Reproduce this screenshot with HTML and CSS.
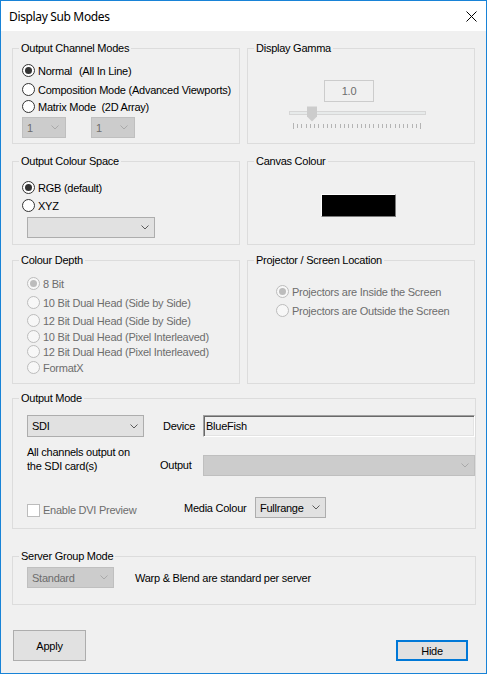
FILE: index.html
```html
<!DOCTYPE html>
<html>
<head>
<meta charset="utf-8">
<title>Display Sub Modes</title>
<link rel="stylesheet" href="styles.css">
</head>
<body>
<div class="window">
  <div class="titlebar">
    <span class="title">Display Sub Modes</span>
    <svg class="close" width="11" height="11" viewBox="0 0 11 11"><path d="M0.5 0.5L10.5 10.5M10.5 0.5L0.5 10.5" stroke="#000" stroke-width="1" fill="none"/></svg>
  </div>
  <div class="content">
    <div class="pair row1">
      <fieldset class="group">
        <legend>Output Channel Modes</legend>
        <div class="inner ocm">
          <div class="radio on"><span class="dot"></span><span>Normal</span><span class="aside">(All In Line)</span></div>
          <div class="radio"><span class="dot"></span><span>Composition Mode (Advanced Viewports)</span></div>
          <div class="radio"><span class="dot"></span><span>Matrix Mode&nbsp; (2D Array)</span></div>
          <div class="combos">
            <div class="combo disabled small"><span>1</span><svg class="chev" width="8" height="5" viewBox="0 0 8 5"><path d="M0.5 0.5L4 4L7.5 0.5" fill="none" stroke="currentColor"/></svg></div>
            <div class="combo disabled small second"><span>1</span><svg class="chev" width="8" height="5" viewBox="0 0 8 5"><path d="M0.5 0.5L4 4L7.5 0.5" fill="none" stroke="currentColor"/></svg></div>
          </div>
        </div>
      </fieldset>
      <fieldset class="group">
        <legend>Display Gamma</legend>
        <div class="inner gamma">
          <div class="tb-gamma">1.0</div>
          <svg class="slider" width="140" height="24" viewBox="0 0 140 24">
            <rect x="2.5" y="6.5" width="136" height="3" fill="#e7eaea" stroke="#d6d6d6"/>
            <path d="M20 1.5H30V11.5L25 16.5L20 11.5Z" fill="#cccccc"/>
            <path d="M6.5 18v6M10.5 19v4M14.5 19v4M19.5 19v4M23.5 19v4M27.5 19v4M31.5 19v4M36.5 19v4M40.5 19v4M44.5 19v4M48.5 19v4M53.5 19v4M57.5 19v4M61.5 19v4M65.5 19v4M70.5 19v4M74.5 19v4M78.5 19v4M82.5 19v4M86.5 19v4M91.5 19v4M95.5 19v4M99.5 19v4M103.5 19v4M108.5 19v4M112.5 19v4M116.5 19v4M120.5 19v4M125.5 19v4M129.5 19v4M133.5 18v6" stroke="#b4b4b4" stroke-width="1" fill="none"/>
          </svg>
        </div>
      </fieldset>
    </div>

    <div class="pair row2">
      <fieldset class="group">
        <legend>Output Colour Space</legend>
        <div class="inner ocs">
          <div class="radio on"><span class="dot"></span><span>RGB (default)</span></div>
          <div class="radio"><span class="dot"></span><span>XYZ</span></div>
          <div class="combo wide"><span></span><svg class="chev" width="8" height="5" viewBox="0 0 8 5"><path d="M0.5 0.5L4 4L7.5 0.5" fill="none" stroke="currentColor"/></svg></div>
        </div>
      </fieldset>
      <fieldset class="group">
        <legend>Canvas Colour</legend>
        <div class="inner canvas">
          <div class="swatch"></div>
        </div>
      </fieldset>
    </div>

    <div class="pair row3">
      <fieldset class="group">
        <legend>Colour Depth</legend>
        <div class="inner depth">
          <div class="radio dis on"><span class="dot"></span><span>8 Bit</span></div>
          <div class="radio dis"><span class="dot"></span><span>10 Bit Dual Head (Side by Side)</span></div>
          <div class="radio dis"><span class="dot"></span><span>12 Bit Dual Head (Side by Side)</span></div>
          <div class="radio dis"><span class="dot"></span><span>10 Bit Dual Head (Pixel Interleaved)</span></div>
          <div class="radio dis"><span class="dot"></span><span>12 Bit Dual Head (Pixel Interleaved)</span></div>
          <div class="radio dis"><span class="dot"></span><span>FormatX</span></div>
        </div>
      </fieldset>
      <fieldset class="group">
        <legend>Projector / Screen Location</legend>
        <div class="inner proj">
          <div class="radio dis on"><span class="dot"></span><span>Projectors are Inside the Screen</span></div>
          <div class="radio dis"><span class="dot"></span><span>Projectors are Outside the Screen</span></div>
        </div>
      </fieldset>
    </div>

    <fieldset class="group outmode">
      <legend>Output Mode</legend>
      <div class="inner om">
        <div class="om-row om-a">
          <div class="combo sdi"><span>SDI</span><svg class="chev" width="8" height="5" viewBox="0 0 8 5"><path d="M0.5 0.5L4 4L7.5 0.5" fill="none" stroke="currentColor"/></svg></div>
          <span class="lbl lbl-device">Device</span>
          <div class="tb-device">BlueFish</div>
        </div>
        <div class="om-row om-b">
          <div class="note">All channels output on<br>the SDI card(s)</div>
          <span class="lbl lbl-output">Output</span>
          <div class="combo disabled fill"><span></span><svg class="chev" width="8" height="5" viewBox="0 0 8 5"><path d="M0.5 0.5L4 4L7.5 0.5" fill="none" stroke="currentColor"/></svg></div>
        </div>
        <div class="om-row om-c">
          <div class="check"><span class="box"></span><span>Enable DVI Preview</span></div>
          <span class="lbl lbl-media">Media Colour</span>
          <div class="combo media"><span>Fullrange</span><svg class="chev" width="8" height="5" viewBox="0 0 8 5"><path d="M0.5 0.5L4 4L7.5 0.5" fill="none" stroke="currentColor"/></svg></div>
        </div>
      </div>
    </fieldset>

    <fieldset class="group server">
      <legend>Server Group Mode</legend>
      <div class="inner sg">
        <div class="combo disabled std"><span>Standard</span><svg class="chev" width="8" height="5" viewBox="0 0 8 5"><path d="M0.5 0.5L4 4L7.5 0.5" fill="none" stroke="currentColor"/></svg></div>
        <span class="sg-text">Warp &amp; Blend are standard per server</span>
      </div>
    </fieldset>

    <div class="buttons">
      <button class="btn apply">Apply</button>
      <button class="btn hide">Hide</button>
    </div>
  </div>
</div>
</body>
</html>
```

FILE: styles.css
```css
* { box-sizing: border-box; }
html, body { margin: 0; padding: 0; }
body {
  background: #ffffff;
  font-family: "Liberation Sans", Arial, sans-serif;
  font-size: 11px;
  letter-spacing: -0.25px;
  color: #000;
}
.window {
  width: 487px;
  height: 674px;
  border: 1px solid #1883d7;
  background: #f0f0f0;
  display: flex;
  flex-direction: column;
}
.titlebar {
  flex: none;
  height: 30px;
  background: #ffffff;
  display: flex;
  align-items: center;
  justify-content: space-between;
  padding: 0 9px 0 8px;
}
.title {
  font-family: "Noto Sans", sans-serif;
  font-size: 12px;
  letter-spacing: -0.35px;
  color: #000;
}
.close { display: block; margin-top: 1px; }

.content { padding: 11px 10px 0 11px; }

.pair {
  display: grid;
  grid-template-columns: 228px 228px;
  column-gap: 7px;
}
.group {
  margin: 0;
  padding: 0;
  min-width: 0;
  border: 1px solid #dcdcdc;
}
.group legend {
  padding: 0 2px;
  margin-left: 6px;
  line-height: 13px;
  font-size: 11px;
}
.row1 .group { height: 102px; }
.row2 { margin-top: 11px; }
.row2 .group { height: 90px; }
.row3 { margin-top: 9px; }
.row3 .group { height: 130px; }
.outmode { margin-top: 8px; height: 137px; width: 464px; }
.server { margin-top: 21px; height: 55px; width: 464px; }

/* radios */
.radio {
  display: flex;
  align-items: center;
  height: 15px;
  white-space: nowrap;
}
.radio .dot {
  flex: none;
  width: 13px;
  height: 13px;
  border: 1px solid #333333;
  border-radius: 50%;
  background: #ffffff;
  margin-right: 3px;
  display: flex;
  align-items: center;
  justify-content: center;
}
.radio.on .dot::after {
  content: "";
  width: 7px;
  height: 7px;
  border-radius: 50%;
  background: #333333;
}
.radio.dis { color: #6d6d6d; }
.radio.dis .dot { border-color: #bcbcbc; background: #f7f7f7; }
.radio.dis.on .dot::after { background: #bcbcbc; }
.radio .aside { margin-left: 7px; }

/* combos */
.combo {
  height: 21px;
  border: 1px solid #adadad;
  background: #e1e1e1;
  display: flex;
  align-items: center;
  justify-content: space-between;
  padding: 0 5px 0 4px;
  white-space: nowrap;
}
.combo .chev { display: block; color: #5a5a5a; flex: none; }
.combo.disabled { background: #cccccc; border-color: #bfbfbf; color: #6d6d6d; }
.combo.disabled .chev { color: #a9a9a9; }

/* output channel modes */
.ocm { padding: 8px 0 0 9px; }
.ocm .radio:nth-of-type(2) { margin-top: 4px; }
.ocm .radio:nth-of-type(3) { margin-top: 2px; }
.combos { display: flex; margin-top: 3px; }
.combo.small { width: 44px; padding-right: 6px; }
.combo.second { margin-left: 25px; }

/* gamma */
.gamma { padding: 25px 0 0 0; }
.tb-gamma {
  width: 50px;
  height: 22px;
  margin-left: 76px;
  border: 1px solid #cccccc;
  background: #f0f0f0;
  color: #6d6d6d;
  display: flex;
  align-items: center;
  justify-content: center;
}
.slider { display: block; margin: 3px 0 0 39px; }

/* colour space */
.ocs { padding: 12px 0 0 9px; }
.ocs .radio:nth-of-type(2) { margin-top: 3px; }
.combo.wide { width: 128px; margin: 4px 0 0 5px; }

/* canvas colour */
.canvas { padding: 26px 0 0 73px; }
.swatch {
  width: 75px;
  height: 23px;
  background: #000;
  border-top: 1px solid #ffffff;
  border-left: 1px solid #ffffff;
  border-right: 1px solid #7a7a7a;
  border-bottom: 1px solid #7a7a7a;
}

/* colour depth */
.depth { padding: 9px 0 0 14px; }
.depth .radio:nth-of-type(2) { margin-top: 4px; }
.depth .radio:nth-of-type(3) { margin-top: 3px; }
.depth .radio:nth-of-type(4) { margin-top: 1px; }
.depth .radio:nth-of-type(5) { margin-top: 0; }
.depth .radio:nth-of-type(6) { margin-top: 1px; }

/* projector */
.proj { padding: 17px 0 0 28px; }
.proj .radio:nth-of-type(2) { margin-top: 4px; }

/* output mode */
.om { padding: 10px 0 0 14px; }
.om-row { display: flex; align-items: center; white-space: nowrap; }
.combo.sdi { width: 117px; height: 22px; }
.lbl { flex: none; }
.lbl-device { width: 40px; margin-left: 19px; }
.tb-device {
  flex: 1;
  height: 22px;
  background: #f0f0f0;
  border-top: 1px solid #a0a0a0;
  border-left: 1px solid #a0a0a0;
  border-right: 1px solid #ffffff;
  border-bottom: 1px solid #ffffff;
  box-shadow: inset 1px 1px 0 #696969, inset -1px -1px 0 #e3e3e3;
  padding-left: 2px;
  display: flex;
  align-items: center;
}
.om-b { margin-top: 8px; height: 31px; align-items: flex-end; }
.note { width: 133px; line-height: 14px; align-self: flex-start; }
.lbl-output { width: 43px; line-height: 21px; }
.combo.fill { flex: 1; }
.om-c { margin-top: 21px; height: 21px; }
.check { width: 157px; display: flex; align-items: center; color: #6d6d6d; margin-top: 5px; }
.check .box {
  width: 13px;
  height: 13px;
  border: 1px solid #bcbcbc;
  background: #ffffff;
  margin-right: 3px;
  flex: none;
}
.lbl-media { width: 71px; }
.combo.media { width: 71px; }

/* server group */
.sg { padding: 4px 0 0 14px; display: flex; align-items: center; }
.combo.std { width: 87px; }
.sg-text { margin-left: 21px; margin-top: 1px; }

/* buttons */
.buttons {
  margin-top: 25px;
  display: flex;
  justify-content: space-between;
  align-items: flex-end;
  padding: 0 8px 0 1px;
}
.btn {
  font-family: "Liberation Sans", Arial, sans-serif;
  font-size: 11px;
  letter-spacing: -0.25px;
  color: #000;
  background: #e1e1e1;
  border: 1px solid #adadad;
  padding: 0;
  margin: 0;
}
.btn.apply { width: 73px; height: 31px; }
.btn.hide { width: 72px; height: 21px; border: 2px solid #0078d7; }
```
